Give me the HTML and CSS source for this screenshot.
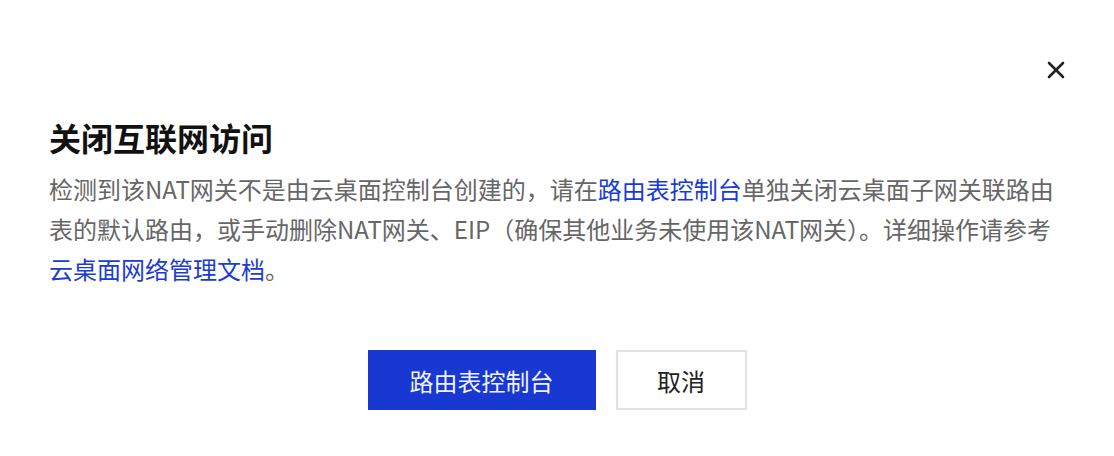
FILE: index.html
```html
<!DOCTYPE html>
<html lang="zh-CN">
<head>
  <meta charset="UTF-8">
  <title>关闭互联网访问</title>
  <link rel="stylesheet" href="styles.css">
</head>
<body>
  <div class="dialog">
    <div class="dialog-header">
      <button class="close-btn" aria-label="关闭">
        <svg width="18" height="18" viewBox="0 0 18 18">
          <path d="M2 2 L16 16 M16 2 L2 16" stroke="#222" stroke-width="2.6" stroke-linecap="round"/>
        </svg>
      </button>
    </div>
    <h2 class="dialog-title">关闭互联网访问</h2>
    <p class="dialog-body">
      检测到该NAT网关不是由云桌面控制台创建的，请在<a href="#">路由表控制台</a>单独关闭云桌面子网关联路由表的默认路由，或手动删除NAT网关、EIP（确保其他业务未使用该NAT网关）。详细操作请参考<a href="#">云桌面网络管理文档</a>。
    </p>
    <div class="dialog-footer">
      <button class="btn btn-primary">路由表控制台</button>
      <button class="btn btn-default">取消</button>
    </div>
  </div>
</body>
</html>
```

FILE: styles.css
```css
body {
  margin: 0;
  padding: 0;
  background-color: #fff;
  font-family: "Noto Sans CJK SC", "Noto Sans", sans-serif;
}
.dialog {
  padding: 0 49px;
}
.dialog-header {
  display: flex;
  justify-content: flex-end;
  padding-top: 61px;
}
.close-btn {
  width: 18px;
  height: 18px;
  padding: 0;
  border: none;
  background: none;
  cursor: pointer;
  display: flex;
}
.dialog-title {
  margin: 36px 0 0;
  font-size: 32px;
  line-height: 44px;
  font-weight: bold;
  color: #111;
}
.dialog-body {
  margin: 10px 0 0;
  font-size: 24px;
  line-height: 40px;
  color: #666;
}
.dialog-body a {
  color: #1a3bd4;
  text-decoration: none;
}
.dialog-footer {
  display: flex;
  justify-content: center;
  gap: 20px;
  margin-top: 61px;
}
.btn {
  height: 60px;
  padding: 0 40px;
  font-family: inherit;
  font-size: 24px;
  border: 2px solid transparent;
  cursor: pointer;
  box-shadow: 0 3px 0 #eef1f8;
}
.btn-primary {
  background-color: #1937d1;
  border-color: #1937d1;
  color: #eef1ff;
}
.btn-default {
  padding: 0 39.5px;
  background-color: #fff;
  border-color: #dfe2ee;
  color: #222;
}
```
